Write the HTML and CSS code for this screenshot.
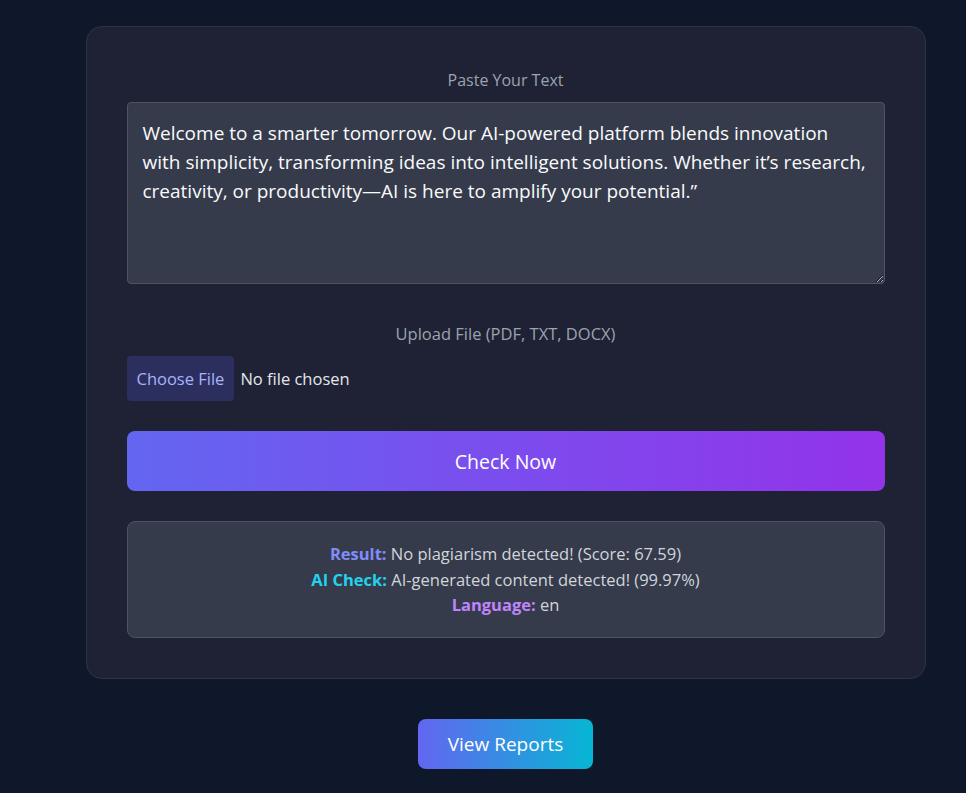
FILE: index.html
```html
<!DOCTYPE html>
<html lang="en">
<head>
<meta charset="utf-8">
<title>AI Checker</title>
<link rel="stylesheet" href="styles.css">
</head>
<body>
<main class="page">
  <form class="card">
    <label class="field-label" for="text">Paste Your Text</label>
    <textarea id="text" class="text-input">Welcome to a smarter tomorrow. Our AI-powered platform blends innovation with simplicity, transforming ideas into intelligent solutions. Whether it’s research, creativity, or productivity—AI is here to amplify your potential.”</textarea>

    <label class="field-label upload-label" for="file">Upload File (PDF, TXT, DOCX)</label>
    <input id="file" class="file-input" type="file">

    <button type="button" class="check-btn">Check Now</button>

    <div class="result">
      <p><strong class="k-result">Result:</strong> No plagiarism detected! (Score: 67.59)</p>
      <p><strong class="k-ai">AI Check:</strong> AI-generated content detected! (99.97%)</p>
      <p><strong class="k-lang">Language:</strong> en</p>
    </div>
  </form>
  <div class="footer">
    <a class="reports-btn" href="#">View Reports</a>
  </div>
</main>
</body>
</html>
```

FILE: styles.css
```css
* { box-sizing: border-box; }
html, body { margin: 0; padding: 0; }
body {
  background: #0f172a;
  font-family: "Open Sans", "Noto Sans", sans-serif;
  color: #e5e7eb;
  min-height: 793px;
}
.page {
  padding-top: 26px;
  padding-left: 45px;
  display: flex;
  flex-direction: column;
  align-items: center;
}
.card {
  width: 840px;
  background: #1e2234;
  border: 1px solid #2e3446;
  border-radius: 16px;
  padding: 40px;
  display: flex;
  flex-direction: column;
}
.field-label {
  display: block;
  text-align: center;
  color: #9ca3af;
  font-size: 16px;
  line-height: 26px;
  margin-bottom: 9px;
}
.upload-label { margin-top: 37px; font-size: 16.5px; }
.text-input {
  display: block;
  width: 100%;
  height: 182px;
  background: #353b4b;
  border: 1px solid #4b5366;
  border-radius: 4px;
  color: #f9fafb;
  font-family: inherit;
  font-size: 19px;
  line-height: 29px;
  padding: 16px 15px;
  resize: vertical;
}
.file-input {
  display: block;
  font-family: inherit;
  font-size: 16.5px;
  color: #e5e7eb;
  height: 45px;
}
.file-input::file-selector-button {
  font-family: inherit;
  font-size: 16.5px;
  height: 45px;
  padding: 0 10px;
  margin-right: 6px;
  border: none;
  border-radius: 4px;
  background: #2c2f5e;
  color: #a5b4fc;
}
.check-btn {
  margin-top: 30px;
  height: 60px;
  border: none;
  border-radius: 8px;
  background: linear-gradient(90deg, #6366f1, #9333ea);
  color: #ffffff;
  font-family: inherit;
  font-size: 19.5px;
}
.result {
  margin-top: 30px;
  background: #353b4b;
  border: 1px solid #4b5366;
  border-radius: 8px;
  padding: 19px 16px;
  text-align: center;
  font-size: 16.5px;
  line-height: 25.6px;
  color: #d1d5db;
}
.result p { margin: 0; }
.k-result { color: #818cf8; }
.k-ai { color: #22d3ee; }
.k-lang { color: #c084fc; }
.footer {
  margin-top: 40px;
}
.reports-btn {
  display: inline-flex;
  align-items: center;
  justify-content: center;
  width: 175px;
  height: 50px;
  border-radius: 8px;
  background: linear-gradient(90deg, #6366f1, #06b6d4);
  color: #ffffff;
  font-size: 19px;
  text-decoration: none;
}
```
